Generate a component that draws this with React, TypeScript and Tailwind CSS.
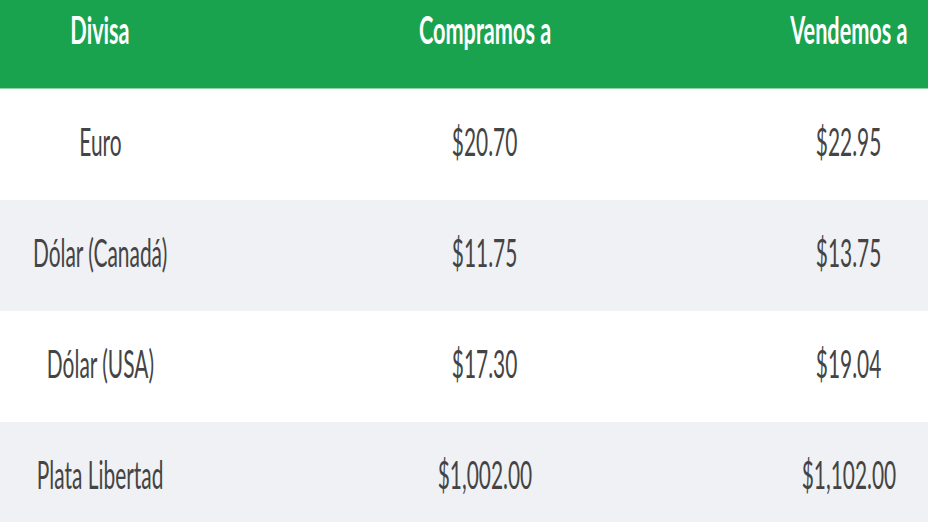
const rates = [
  { name: 'Euro', buy: '$20.70', sell: '$22.95' },
  { name: 'Dólar (Canadá)', buy: '$11.75', sell: '$13.75' },
  { name: 'Dólar (USA)', buy: '$17.30', sell: '$19.04' },
  { name: 'Plata Libertad', buy: '$1,002.00', sell: '$1,102.00' },
];

function Cell({ children, bold }: { children: React.ReactNode; bold?: boolean }) {
  return (
    <div className="flex justify-center">
      <span
        className={
          bold
            ? 'inline-block whitespace-nowrap text-[38px] font-bold leading-none text-white scale-x-[0.57]'
            : 'inline-block whitespace-nowrap text-[38px] leading-none text-[#444444] scale-x-[0.55]'
        }
      >
        {children}
      </span>
    </div>
  );
}

export default function App() {
  return (
    <div className="w-[928px] h-[522px] overflow-hidden bg-white font-['Lato','Open_Sans',sans-serif]">
      {/* encabezado */}
      <div className="grid grid-cols-[200px_570px_158px] h-[89px] pt-[10px] bg-[#1aa34f] border-b border-[#8fd4a5]">
        <Cell bold>Divisa</Cell>
        <Cell bold>Compramos a</Cell>
        <Cell bold>Vendemos a</Cell>
      </div>

      {rates.map((r, i) => (
        <div
          key={r.name}
          className={
            i % 2 === 1
              ? 'grid grid-cols-[200px_570px_158px] items-center h-[111px] pb-[8px] bg-[#f0f1f4]'
              : 'grid grid-cols-[200px_570px_158px] items-center h-[111px] pb-[8px] bg-white'
          }
        >
          <Cell>{r.name}</Cell>
          <Cell>{r.buy}</Cell>
          <Cell>{r.sell}</Cell>
        </div>
      ))}
    </div>
  );
}
